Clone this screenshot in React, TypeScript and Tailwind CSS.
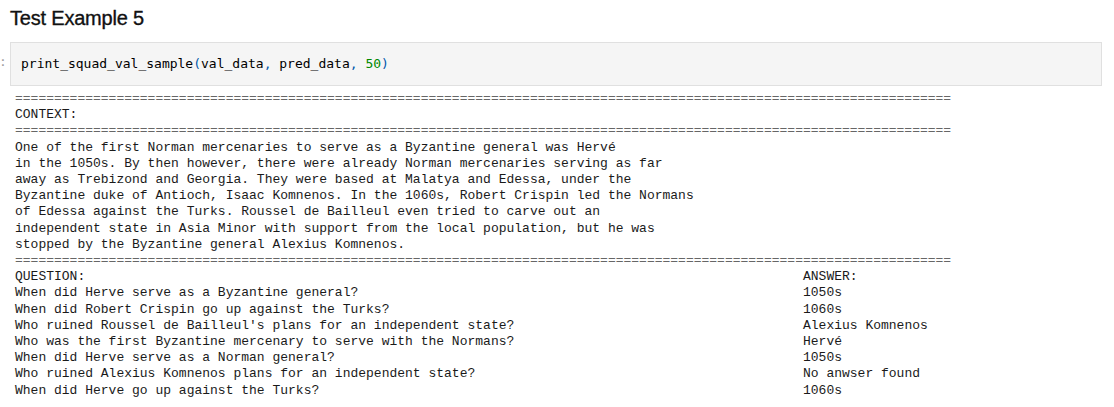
import React from "react";

const context = [
  "One of the first Norman mercenaries to serve as a Byzantine general was Hervé",
  "in the 1050s. By then however, there were already Norman mercenaries serving as far",
  "away as Trebizond and Georgia. They were based at Malatya and Edessa, under the",
  "Byzantine duke of Antioch, Isaac Komnenos. In the 1060s, Robert Crispin led the Normans",
  "of Edessa against the Turks. Roussel de Bailleul even tried to carve out an",
  "independent state in Asia Minor with support from the local population, but he was",
  "stopped by the Byzantine general Alexius Komnenos.",
];

const qa: [string, string][] = [
  ["QUESTION:", "ANSWER:"],
  ["When did Herve serve as a Byzantine general?", "1050s"],
  ["When did Robert Crispin go up against the Turks?", "1060s"],
  ["Who ruined Roussel de Bailleul's plans for an independent state?", "Alexius Komnenos"],
  ["Who was the first Byzantine mercenary to serve with the Normans?", "Hervé"],
  ["When did Herve serve as a Norman general?", "1050s"],
  ["Who ruined Alexius Komnenos plans for an independent state?", "No anwser found"],
  ["When did Herve go up against the Turks?", "1060s"],
];

const eq = "=".repeat(120);

export default function App() {
  return (
    <div className="w-[1114px] h-[407px] overflow-hidden bg-white text-black">
      <div className="pl-[10px] pr-[12px]">
        <h3 className="mt-[4px] h-[28px] leading-[28px] text-[20px] tracking-[-0.2px] text-[#111] [-webkit-text-stroke:0.35px_#111] font-['Liberation_Sans',Arial,sans-serif]">
          Test Example 5
        </h3>
      </div>
      <div className="mt-[10px] flex">
        <div className="w-[10px] shrink-0 pt-[11px] font-['DejaVu_Sans_Mono',monospace] text-[13px] leading-[17px] text-[#9e9e9e]">
          <span className="-ml-[1px] inline-block w-[4px] overflow-visible">:</span>
        </div>
        <div className="w-[1092px] h-[44px] border border-[#e0e0e0] bg-[#f5f5f5] pl-[10px] pt-[12px] font-['DejaVu_Sans_Mono',monospace] text-[13px] leading-[17px] text-[#000] whitespace-pre">
          print_squad_val_sample<span className="text-[#0055aa]">(</span>val_data<span className="text-[#0055aa]">,</span> pred_data<span className="text-[#0055aa]">,</span> <span className="text-[#008800]">50</span><span className="text-[#0055aa]">)</span>
        </div>
      </div>
      <div className="mt-[5px] pl-[15px] font-['Liberation_Mono','Courier_New',monospace] text-[13px] leading-[16.2px] text-[#1a1a1a] whitespace-pre">
        <div className="text-[#666]">{eq}</div>
        <div>CONTEXT:</div>
        <div className="text-[#666]">{eq}</div>
        {context.map((l, i) => (
          <div key={i}>{l}</div>
        ))}
        <div className="text-[#666]">{eq}</div>
        {qa.map(([q, a], i) => (
          <div key={i} className="grid grid-cols-[788px_auto]">
            <span>{q}</span>
            <span>{a}</span>
          </div>
        ))}
      </div>
    </div>
  );
}
